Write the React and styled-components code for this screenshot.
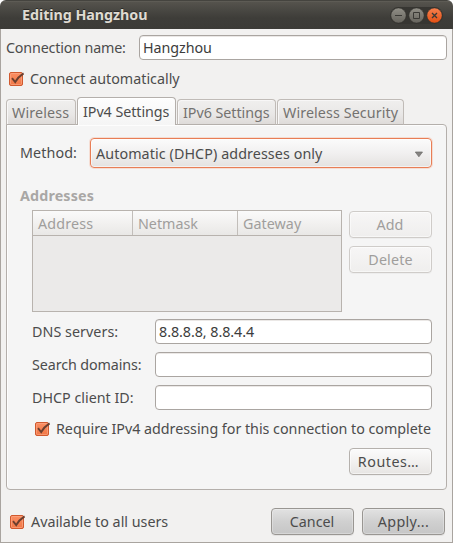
import React from 'react';
import styled, { createGlobalStyle, css } from 'styled-components';

const GlobalStyle = createGlobalStyle`
  * { box-sizing: border-box; }
  body { margin: 0; background: #fff; }
`;

const Window = styled.main`
  width: 453px;
  height: 543px;
  display: flex;
  flex-direction: column;
  overflow: hidden;
  border-radius: 6px 6px 0 0;
  background: #f2f1f0;
  color: #4c4c4c;
  font: 14.3px/20px "Noto Sans", "Open Sans", sans-serif;
`;

const TitleBar = styled.header`
  flex: none;
  height: 29px;
  display: flex;
  align-items: center;
  justify-content: space-between;
  padding: 0 10px 0 22px;
  border-top: 1px solid #45443f;
  background: linear-gradient(#66645d 0, #55534d 1px, #3e3d39 17px, #3c3b37);
`;

const WindowTitle = styled.h1`
  margin: 0 0 1px;
  font-size: 14.3px;
  line-height: 20px;
  font-weight: 700;
  letter-spacing: -.05px;
  color: #dfdbd2;
  text-shadow: 0 -1px #2b2a27;
`;

const WindowButtons = styled.div`
  display: flex;
  gap: 1px;
  border-radius: 9px;
  background: #373632;
`;

const Body = styled.div`
  flex: 1;
  display: flex;
  flex-direction: column;
  border: solid #a9a49f;
  border-width: 0 1px 1px;
  padding: 6px 5px 7px;
`;

const Text = styled.span`
  white-space: pre;
  letter-spacing: ${(p) => p.$track || 0}px;
`;

const Field = styled.div`
  display: flex;
  align-items: center;
  height: 25px;
`;

const FieldLabel = styled.label`
  flex: none;
  width: ${(p) => p.$width}px;
  white-space: pre;
  letter-spacing: ${(p) => p.$track || 0}px;
`;

const Entry = styled.div`
  flex: 1;
  height: 25px;
  padding: 2px 3px;
  border: 1px solid #aaa5a1;
  border-radius: 4px;
  background: #fff;
  box-shadow: inset 0 1px #ebe8e6;
  color: #3c3c3c;
  letter-spacing: -.05px;
`;

const CheckRow = styled.div`
  display: flex;
  align-items: center;
  gap: 5px;
  height: 20px;
  margin: ${(p) => p.$margin || 0};
`;

const Tabs = styled.nav`
  position: relative;
  z-index: 1;
  display: flex;
  align-items: flex-end;
  gap: 1px;
  height: 28px;
  margin: 8px 0 -1px;
`;

const Tab = styled.div`
  width: ${(p) => p.$width}px;
  height: 26px;
  padding: 3px 0 0 5px;
  border: 1px solid #c0bbb7;
  border-bottom-color: #b4afab;
  border-radius: 4px 4px 0 0;
  background: linear-gradient(#f0efee, #e9e7e6 60%, #dedbd9);
  box-shadow: inset 1px 1px #f8f7f7;
  color: #747270;
  ${(p) => p.$active && css`
    height: 28px;
    padding-top: 4px;
    border-color: #b4afab;
    border-bottom: 0;
    background: linear-gradient(#fdfdfd, #f5f5f5);
    box-shadow: inset 1px 1px #fff;
    color: #4c4c4c;
  `}
`;

const Panel = styled.section`
  height: 366px;
  display: flex;
  flex-direction: column;
  padding: 13px 14px 13px 13px;
  border: 1px solid #b4afab;
  border-radius: 0 4px 4px 4px;
  background: #f5f5f5;
  box-shadow: inset 1px 1px #fdfdfd;
`;

const MethodRow = styled.div`
  display: flex;
  align-items: center;
`;

const Combo = styled.div`
  flex: 1;
  height: 30px;
  display: flex;
  align-items: center;
  justify-content: space-between;
  padding: 1px 7px 0 5px;
  border: 1px solid #e87e56;
  border-radius: 4px;
  background: linear-gradient(#fbfbfb, #f1f0f0 50%, #e4e2e0);
  box-shadow: inset 0 0 0 1px rgba(255, 255, 255, .55), 0 0 0 1px #f5ddd3;
`;

const SectionTitle = styled.h2`
  margin: 18px 0 4px;
  font-size: 14.3px;
  line-height: 20px;
  letter-spacing: .15px;
  color: #a9a7a5;
`;

const Indented = styled.div`
  display: flex;
  flex-direction: column;
  padding-left: 12px;
`;

const AddressArea = styled.div`
  display: flex;
  gap: 7px;
`;

const Table = styled.div`
  width: 310px;
  height: 102px;
  border: 1px solid #b8b3ae;
  background: #ebeae9;
`;

const TableHead = styled.div`
  display: grid;
  grid-template-columns: 99px 105px 1fr;
  height: 25px;
  border-bottom: 1px solid #b8b3ae;
  background: linear-gradient(#fafafa, #f1f0ef 55%, #e9e8e6);
`;

const HeadCell = styled.div`
  padding: 3px 0 0 5px;
  color: #a09e9c;
  & + & { border-left: 1px solid #c2beba; }
`;

const SideButtons = styled.div`
  display: flex;
  flex-direction: column;
  gap: 8px;
  padding-top: 1px;
`;

const Button = styled.div`
  width: 83px;
  height: 27px;
  display: flex;
  align-items: center;
  justify-content: center;
  padding-right: ${(p) => p.$shift || 0}px;
  border: 1px solid #b5b1ad;
  border-radius: 4px;
  background: linear-gradient(#fbfbfb, #f2f1f0 50%, #e7e5e3);
  box-shadow: inset 0 0 0 1px rgba(255, 255, 255, .5), 0 1px rgba(0, 0, 0, .03);
  ${(p) => p.$disabled && css`
    border-color: #cfccc9;
    background: linear-gradient(#f7f6f6, #efeeed);
    color: #a09e9c;
  `}
  ${(p) => p.$dialog && css`
    border-color: #999692;
    background: linear-gradient(#e2e2e2, #d0d0d0 50%, #c6c6c6);
    box-shadow: inset 0 0 0 1px rgba(255, 255, 255, .28), 0 1px rgba(0, 0, 0, .06);
  `}
`;

const Fields = styled.div`
  display: flex;
  flex-direction: column;
  gap: 8px;
  margin-top: 7px;
`;

const RoutesRow = styled.div`
  display: flex;
  justify-content: flex-end;
`;

const Footer = styled.footer`
  display: flex;
  align-items: center;
  justify-content: space-between;
  margin: auto 2px 0 1px;
`;

const Actions = styled.div`
  display: flex;
  gap: 8px;
`;

const CheckIcon = () => (
  <svg width="17" height="16" viewBox="0 0 17 16">
    <defs>
      <linearGradient id="check" x2="0" y2="1">
        <stop stopColor="#fb8f64" />
        <stop offset="1" stopColor="#f07746" />
      </linearGradient>
    </defs>
    <rect x="1.5" y="1.5" width="13" height="13" rx="1.5" fill="url(#check)" stroke="#d0592e" />
    <rect x="2.5" y="2.5" width="11" height="11" rx="1" fill="none" stroke="#fbab8b" opacity=".6" />
    <path d="M4 7.2 7.2 11Q10 6 15.6 2.4" fill="none" stroke="#6b3f2f" strokeWidth="1.9" />
  </svg>
);

const ControlIcon = ({ kind }) => (
  <svg width="17" height="17" viewBox="0 0 17 17">
    <defs>
      <linearGradient id={kind} x2="0" y2="1">
        <stop stopColor={kind === 'close' ? '#f7814f' : '#918f87'} />
        <stop offset="1" stopColor={kind === 'close' ? '#e34f12' : '#65635c'} />
      </linearGradient>
    </defs>
    <circle cx="8.5" cy="8.5" r="7.6" fill={`url(#${kind})`} stroke="#32312d" strokeWidth=".5" />
    <g fill="none" stroke="#3a3935" strokeWidth="1">
      {kind === 'minimize' && <path d="M5 8.5h7" />}
      {kind === 'maximize' && <path d="M5.5 5.5h6v6h-6z" />}
      {kind === 'close' && <path strokeWidth="1.3" d="m6 6 5 5m0-5-5 5" />}
    </g>
  </svg>
);

const ArrowIcon = () => (
  <svg width="10" height="8" viewBox="0 0 10 8">
    <path d="M1.3 2h7.2L4.9 6.8z" fill="#858381" stroke="#6c6a68" strokeWidth=".7" />
  </svg>
);

export default function App() {
  return (
    <>
      <GlobalStyle />
      <Window>
        <TitleBar>
          <WindowTitle>Editing Hangzhou</WindowTitle>
          <WindowButtons>
            <ControlIcon kind="minimize" />
            <ControlIcon kind="maximize" />
            <ControlIcon kind="close" />
          </WindowButtons>
        </TitleBar>
        <Body>
          <Field>
            <FieldLabel $width={133} $track={-0.17}>Connection name:</FieldLabel>
            <Entry>Hangzhou</Entry>
          </Field>
          <CheckRow $margin="9px 0 0 2px">
            <CheckIcon />
            <Text>Connect automatically</Text>
          </CheckRow>
          <Tabs>
            <Tab $width={70}><Text $track={0.15}>Wireless</Text></Tab>
            <Tab $width={99} $active><Text $track={-0.05}>IPv4 Settings</Text></Tab>
            <Tab $width={99}><Text $track={-0.03}>IPv6 Settings</Text></Tab>
            <Tab $width={127}><Text $track={0.1}>Wireless Security</Text></Tab>
          </Tabs>
          <Panel>
            <MethodRow>
              <FieldLabel $width={70} $track={0.1}>Method:</FieldLabel>
              <Combo>
                <Text $track={0.09}>Automatic (DHCP) addresses only</Text>
                <ArrowIcon />
              </Combo>
            </MethodRow>
            <SectionTitle>Addresses</SectionTitle>
            <Indented>
              <AddressArea>
                <Table>
                  <TableHead>
                    <HeadCell><Text $track={0.15}>Address</Text></HeadCell>
                    <HeadCell><Text>Netmask</Text></HeadCell>
                    <HeadCell><Text $track={0.05}>Gateway</Text></HeadCell>
                  </TableHead>
                </Table>
                <SideButtons>
                  <Button $disabled $shift={1}><Text $track={0.1}>Add</Text></Button>
                  <Button $disabled><Text $track={0.15}>Delete</Text></Button>
                </SideButtons>
              </AddressArea>
              <Fields>
                <Field>
                  <FieldLabel $width={123} $track={0.05}>DNS servers:</FieldLabel>
                  <Entry>8.8.8.8, 8.8.4.4</Entry>
                </Field>
                <Field>
                  <FieldLabel $width={123} $track={-0.1}>Search domains:</FieldLabel>
                  <Entry />
                </Field>
                <Field>
                  <FieldLabel $width={123}>DHCP client ID:</FieldLabel>
                  <Entry />
                </Field>
              </Fields>
              <CheckRow $margin="9px -10px 9px 2px">
                <CheckIcon />
                <Text $track={-0.02}>Require IPv4 addressing for this connection to complete</Text>
              </CheckRow>
              <RoutesRow>
                <Button $shift={4}><Text $track={0.5}>Routes…</Text></Button>
              </RoutesRow>
            </Indented>
          </Panel>
          <Footer>
            <CheckRow $margin="0 0 0 2px">
              <CheckIcon />
              <Text>Available to all users</Text>
            </CheckRow>
            <Actions>
              <Button $dialog $shift={1}><Text>Cancel</Text></Button>
              <Button $dialog><Text $track={0.35}>Apply...</Text></Button>
            </Actions>
          </Footer>
        </Body>
      </Window>
    </>
  );
}
